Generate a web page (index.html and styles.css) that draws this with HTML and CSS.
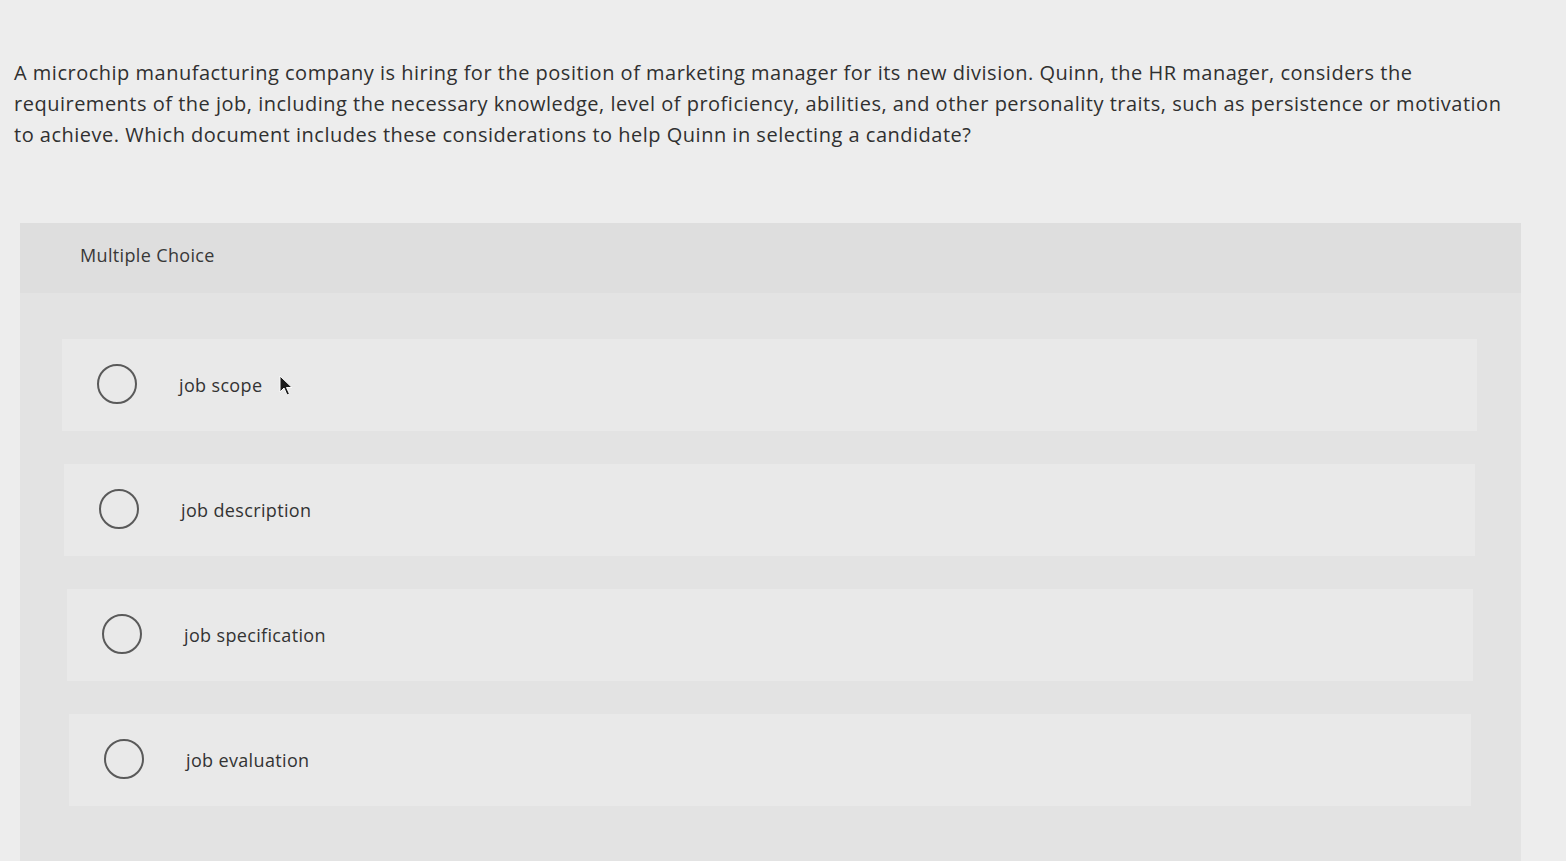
FILE: index.html
```html
<!DOCTYPE html>
<html lang="en">
<head>
<meta charset="utf-8">
<title>Multiple Choice</title>
<link rel="stylesheet" href="styles.css">
</head>
<body>
<div class="page">
  <p class="question">A microchip manufacturing company is hiring for the position of marketing manager for its new division. Quinn, the HR manager, considers the<br>requirements of the job, including the necessary knowledge, level of proficiency, abilities, and other personality traits, such as persistence or motivation<br>to achieve. Which document includes these considerations to help Quinn in selecting a candidate?</p>

  <section class="panel">
    <div class="panel-header">Multiple Choice</div>
    <div class="options">
      <label class="option">
        <span class="radio"></span>
        <span class="option-text">job scope</span>
        <svg class="cursor" width="14" height="22" viewBox="0 0 14 22"><path d="M1 1 L1 17 L5 13 L8 20 L10.5 19 L7.5 12.5 L13 12.5 Z" fill="#1a1a1a" stroke="#fafafa" stroke-width="1"/></svg>
      </label>
      <label class="option shift1">
        <span class="radio"></span>
        <span class="option-text">job description</span>
      </label>
      <label class="option shift2">
        <span class="radio"></span>
        <span class="option-text">job specification</span>
      </label>
      <label class="option shift3">
        <span class="radio"></span>
        <span class="option-text">job evaluation</span>
      </label>
    </div>
  </section>
</div>
</body>
</html>
```

FILE: styles.css
```css
html, body {
  margin: 0;
  padding: 0;
}

body {
  background: #ededed;
  font-family: "Open Sans", "Lato", "Liberation Sans", sans-serif;
  color: #303030;
}

.page {
  padding-top: 57px;
  height: 861px;
  box-sizing: border-box;
  overflow: hidden;
}

.question {
  margin: 0 0 0 14px;
  font-size: 20px;
  letter-spacing: 0.5px;
  line-height: 31px;
  white-space: nowrap;
}

.panel {
  margin: 73px 0 0 20px;
  width: 1501px;
  background: #e3e3e3;
  height: 700px;
}

.panel-header {
  height: 70px;
  background: #dedede;
  padding-left: 60px;
  font-size: 18px;
  letter-spacing: 0.35px;
  line-height: 64px;
  color: #383838;
}

.options {
  display: flex;
  flex-direction: column;
  gap: 33px;
  padding: 46px 44px 0 42px;
}

.option {
  height: 92px;
  background: #e9e9e9;
  display: flex;
  align-items: center;
  padding-left: 35px;
  box-sizing: border-box;
}

.option.shift1 { margin-left: 2px; margin-right: 2px; }
.option.shift2 { margin-left: 5px; margin-right: 4px; }
.option.shift3 { margin-left: 7px; margin-right: 6px; }

.radio {
  width: 36px;
  height: 36px;
  border: 2px solid #5a5a5a;
  border-radius: 50%;
  flex: none;
  margin-top: -2px;
}

.option-text {
  margin-left: 42px;
  font-size: 18px;
  letter-spacing: 0.35px;
  color: #333;
}

.cursor {
  margin-left: 17px;
  margin-top: 2px;
}
```
